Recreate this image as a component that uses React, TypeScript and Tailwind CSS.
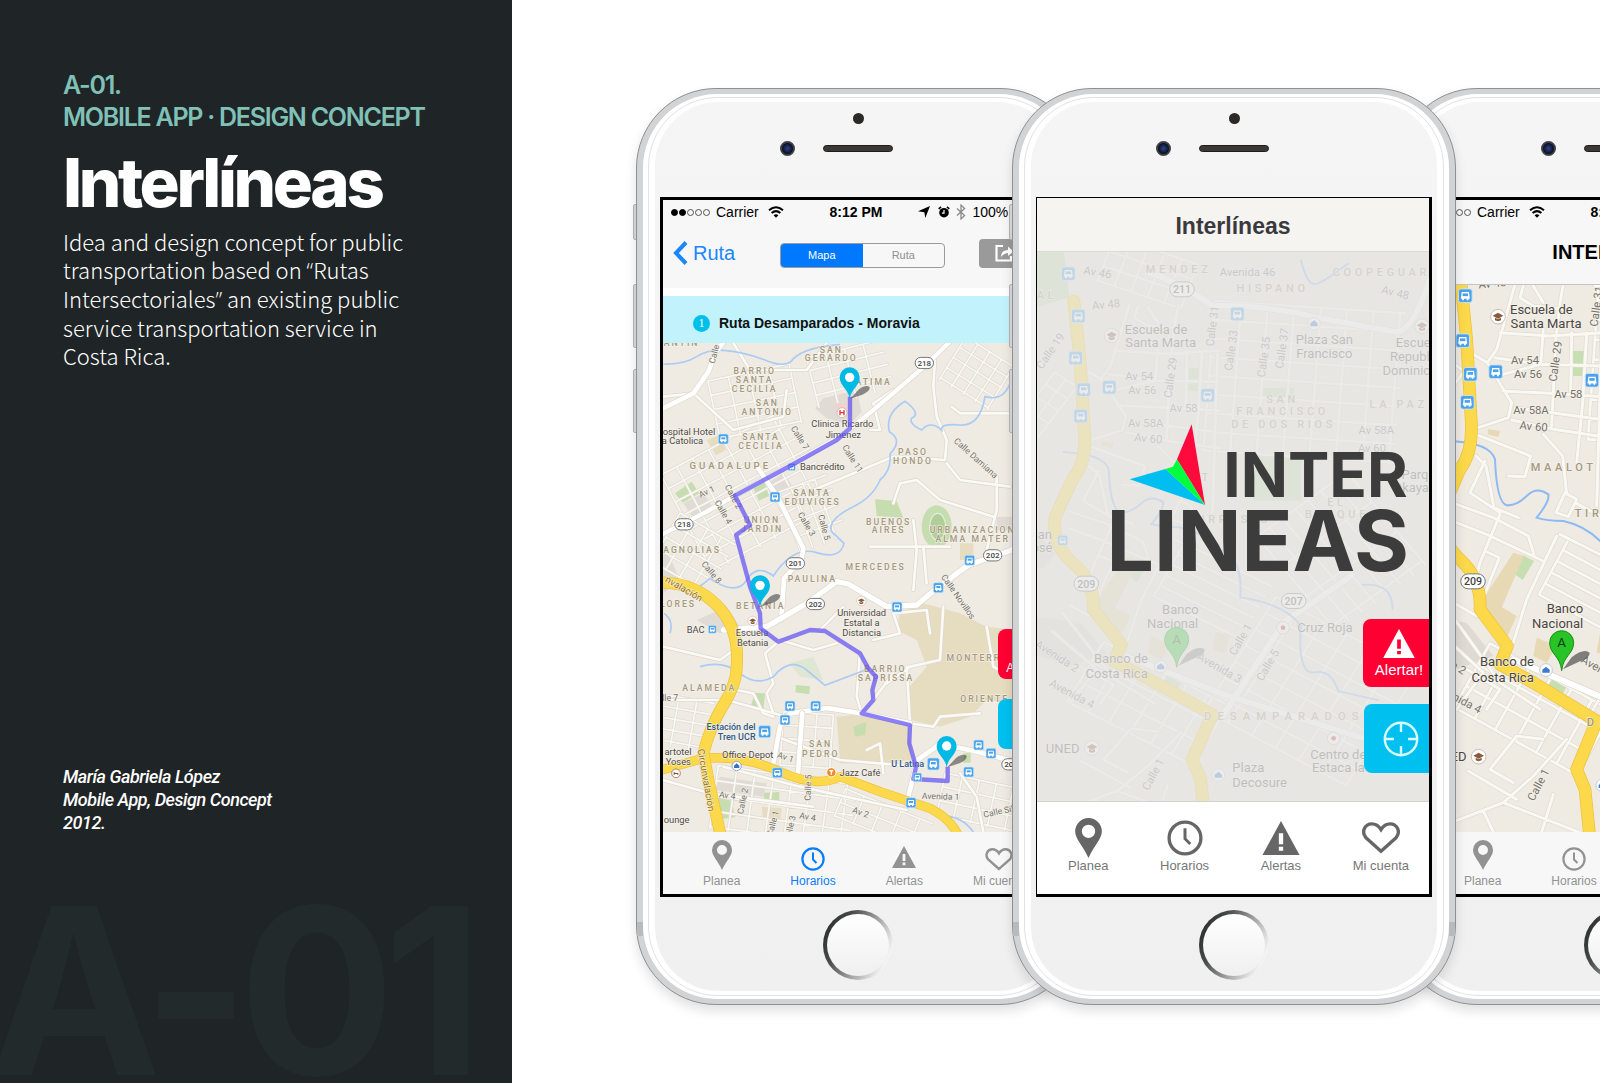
import type { ReactNode } from "react";

type Pt = [number, number];
type Label = { t: string; x: number; y: number; r?: number };

const line = (pts: Pt[]) => "M" + pts.map((p) => p.join(" ")).join("L");

/** Parallel streets in two directions, centred on (cx, cy). */
function grid(cx: number, cy: number, deg: number, w: number, h: number, sx: number, sy: number): string {
  const a = (deg * Math.PI) / 180;
  const at = (x: number, y: number) =>
    `${(cx + x * Math.cos(a) - y * Math.sin(a)).toFixed(0)} ${(cy + x * Math.sin(a) + y * Math.cos(a)).toFixed(0)}`;
  let d = "";
  for (let x = -w / 2; x <= w / 2; x += sx) d += `M${at(x, -h / 2)}L${at(x, h / 2)}`;
  for (let y = -h / 2; y <= h / 2; y += sy) d += `M${at(-w / 2, y)}L${at(w / 2, y)}`;
  return d;
}

function Road({ d, w, fill = "#ffffff", edge = "#ddd7cb" }: { d: string; w: number; fill?: string; edge?: string }) {
  return (
    <g fill="none" strokeLinejoin="round" strokeLinecap="round">
      <path d={d} stroke={edge} strokeWidth={w + 4} />
      <path d={d} stroke={fill} strokeWidth={w} />
    </g>
  );
}

function Labels({ items, size, fill, tracking, weight = 400 }: { items: Label[]; size: number; fill: string; tracking?: number; weight?: number }) {
  return (
    <g
      fontFamily="Roboto, 'Liberation Sans', sans-serif"
      fontSize={size}
      fontWeight={weight}
      fill={fill}
      stroke="#f6f3ec"
      strokeWidth={4}
      strokeOpacity={0.8}
      paintOrder="stroke"
      textAnchor="middle"
      letterSpacing={tracking}
    >
      {items.map((l, i) => (
        <text key={i} x={l.x} y={l.y + size * 0.35} transform={l.r ? `rotate(${l.r} ${l.x} ${l.y})` : undefined}>
          {l.t}
        </text>
      ))}
    </g>
  );
}

function Bus({ x, y, s = 28 }: { x: number; y: number; s?: number }) {
  const k = s / 28;
  return (
    <g transform={`translate(${x} ${y}) scale(${k})`}>
      <rect x={-15} y={-15} width={30} height={30} rx={5} fill="#4ba3ea" stroke="#cfe6fa" strokeWidth={2} />
      <path d="M-8 -8h16l2 15h-3v3h-4v-3h-6v3h-4v-3h-3z" fill="#fff" />
      <path d="M-6 -5h12v6h-12z" fill="#4ba3ea" />
    </g>
  );
}

function Shield({ x, y, t, s = 24 }: { x: number; y: number; t: string; s?: number }) {
  return (
    <g>
      <rect x={x - s * 1.15} y={y - s * 0.7} width={s * 2.3} height={s * 1.4} rx={s * 0.7} fill="#fff" stroke="#777" strokeWidth={3} />
      <text x={x} y={y + s * 0.36} fontSize={s} fontFamily="Roboto, sans-serif" fontWeight={500} fill="#444" textAnchor="middle">
        {t}
      </text>
    </g>
  );
}

function School({ x, y }: { x: number; y: number }) {
  return (
    <g transform={`translate(${x} ${y})`}>
      <circle r={22} fill="#fff" stroke="#c9bfb2" strokeWidth={3} />
      <path d="M0 -12L16 -3L0 6L-16 -3ZM-9 3v8q9 5 18 0v-8l-9 5z" fill="#8a5a3c" />
    </g>
  );
}

function Drop({ x, y }: { x: number; y: number }) {
  return (
    <g transform={`translate(${x} ${y})`}>
      <path d="M2 0L28 -28Q50 -44 60 -34Q62 -22 38 -12Z" fill="#444" opacity={0.6} />
      <path d="M0 0C-4 -28 -30 -38 -30 -64A30 30 0 0 1 30 -64C30 -38 4 -28 0 0Z" fill="#00b9e4" />
      <circle cy={-64} r={14} fill="#fff" />
    </g>
  );
}

const routeDistricts: Label[] = [
  { t: "SAN", x: 574, y: 59 }, { t: "GERARDO", x: 574, y: 84 }, { t: "FATIMA", x: 692, y: 156 },
  { t: "BARRIO", x: 344, y: 123 }, { t: "SANTA", x: 344, y: 149 }, { t: "CECILIA", x: 344, y: 176 },
  { t: "SAN", x: 382, y: 219 }, { t: "ANTONIO", x: 382, y: 246 }, { t: "SANTA", x: 363, y: 322 }, { t: "CECILIA", x: 363, y: 348 },
  { t: "PASO", x: 819, y: 367 }, { t: "HONDO", x: 819, y: 394 }, { t: "SANTA", x: 516, y: 489 }, { t: "EDUVIGES", x: 518, y: 515 },
  { t: "UNION", x: 366, y: 569 }, { t: "JARDIN", x: 366, y: 596 }, { t: "BUENOS", x: 746, y: 576 }, { t: "AIRES", x: 746, y: 601 },
  { t: "URBANIZACION", x: 998, y: 601 }, { t: "ALMA MATER", x: 998, y: 627 }, { t: "MAGNOLIAS", x: 142, y: 661 },
  { t: "MERCEDES", x: 707, y: 711 }, { t: "PAULINA", x: 517, y: 748 }, { t: "BETANIA", x: 362, y: 829 }, { t: "FLORES", x: 104, y: 823 },
  { t: "BARRIO", x: 736, y: 1016 }, { t: "SAPRISSA", x: 738, y: 1043 }, { t: "ALAMEDA", x: 208, y: 1073 },
  { t: "MONTERREY", x: 1023, y: 985 }, { t: "ORIENTE", x: 1034, y: 1107 }, { t: "SAN", x: 542, y: 1243 }, { t: "PEDRO", x: 542, y: 1273 },
  { t: "ANTIN", x: 125, y: 40 },
];
const routeStreets: Label[] = [
  { t: "Calle 7", x: 480, y: 323, r: 58 }, { t: "Calle 11", x: 638, y: 386, r: 58 }, { t: "Av 1", x: 200, y: 485, r: -25 },
  { t: "Calle 2", x: 280, y: 500, r: 62 }, { t: "Calle 4", x: 250, y: 546, r: 60 }, { t: "Calle 3", x: 500, y: 582, r: 60 },
  { t: "Calle 5", x: 553, y: 592, r: 75 }, { t: "Calle 8", x: 215, y: 727, r: 50 }, { t: "Calle Damiana", x: 1008, y: 384, r: 42 },
  { t: "Calle Novillos", x: 955, y: 800, r: 55 }, { t: "Av 1", x: 437, y: 1281, r: 18 }, { t: "Av 4", x: 262, y: 1396, r: 8 },
  { t: "Calle 2", x: 308, y: 1413, r: -78 }, { t: "Calle 5", x: 504, y: 1373, r: -88 }, { t: "Av 4", x: 503, y: 1460, r: 10 },
  { t: "Av 2", x: 662, y: 1447, r: 20 }, { t: "Calle 1", x: 398, y: 1480, r: -75 }, { t: "Calle 3", x: 450, y: 1495, r: -78 },
  { t: "Avenida 1", x: 902, y: 1399, r: 2 }, { t: "Calle Sibaja", x: 1096, y: 1440, r: -12 }, { t: "Calle 7", x: 75, y: 1105 },
  { t: "Calle", x: 222, y: 72, r: -75 },
];
const routePlaces: Label[] = [
  { t: "Hospital Hotel", x: 137, y: 305 }, { t: "La Catolica", x: 120, y: 333 }, { t: "Clinica Ricardo", x: 607, y: 282 }, { t: "Jimenez", x: 610, y: 314 },
  { t: "Bancrédito", x: 547, y: 411 }, { t: "BAC", x: 167, y: 898 }, { t: "Escuela", x: 336, y: 909 }, { t: "Betania", x: 338, y: 938 },
  { t: "Universidad", x: 665, y: 848 }, { t: "Estatal a", x: 665, y: 878 }, { t: "Distancia", x: 665, y: 908 }, { t: "Office Depot", x: 323, y: 1273 },
  { t: "Jazz Café", x: 660, y: 1328 }, { t: "artotel", x: 114, y: 1265 }, { t: "Yoses", x: 115, y: 1296 }, { t: "ounge", x: 110, y: 1468 },
];
const routeTransit: Label[] = [
  { t: "Estación del", x: 273, y: 1190 }, { t: "Tren UCR", x: 290, y: 1220 }, { t: "U Latina", x: 803, y: 1302 },
];

function RouteMap() {
  return (
    <svg viewBox="69 39 1170 1467" className="block h-auto w-full" role="img" aria-label="Mapa de la ruta Desamparados - Moravia">
      <rect x={60} y={30} width={1190} height={1490} fill="#efebe3" />
      <g fill="#e6dcc0">
        <path d="M780 850L850 820L960 850L1040 890L1130 900L1240 960L1240 1100L1110 1120L1040 1110L990 1160L900 1190L815 1170L800 1080L860 1010L830 930L770 900Z" />
        <path d="M590 1160L700 1150L805 1185L815 1290L720 1300L600 1300Z" />
        <path d="M200 330l40 -15l18 45l-30 15zM960 640h40v50h-40zM365 1430l60 5l-5 40l-50 -5z" />
      </g>
      <g fill="#e0dbd4">
        <path d="M550 205L650 180L665 245L630 285L560 265L525 235ZM130 520l60 -30l30 45l-60 30zM390 455l40 -25l25 35l-40 25zM70 640l50 110l-50 40zM170 870l90 -40l40 60l-60 20z" />
        <path d="M240 1340L380 1360L370 1400L225 1380ZM1070 560h60v40h-60z" />
      </g>
      <path d="M585 225l35 -8v45h-25z" fill="#f3cfd0" />
      <g fill="#c6ddb0">
        <path d="M105 490L155 455L178 490L128 518ZM340 475l32 -22l15 45l-30 14zM705 508l65 5l20 50l-80 -5zM345 1088l30 2l-5 52l-38 -12zM468 1065l42 4l-2 24l-42 -6zM372 1388l46 -2v38l-46 -5zM225 1400l50 12l10 50l-40 5zM970 1270h22v28h-22zM640 1190l40 -15l-5 40l-30 5z" />
        <ellipse cx={890} cy={590} rx={45} ry={64} />
      </g>
      <ellipse cx={893} cy={590} rx={24} ry={40} fill="#b0ce98" stroke="#e2eed6" strokeWidth={4} />
      <path d="M450 1000L520 980L550 1050L480 1040Z" fill="#dfe6d2" />

      <Road w={5} fill="#faf8f4" edge="#e0dbd0" d={grid(330, 480, -28, 430, 330, 54, 46)} />
      <Road w={5} fill="#faf8f4" edge="#e0dbd0" d={grid(345, 215, -12, 250, 180, 62, 44)} />
      <Road w={5} fill="#faf8f4" edge="#e0dbd0" d={grid(630, 130, -14, 230, 150, 58, 38)} />
      <Road w={5} fill="#faf8f4" edge="#e0dbd0" d={grid(1010, 130, 32, 170, 150, 42, 36)} />
      <Road w={5} fill="#faf8f4" edge="#e0dbd0" d={grid(520, 550, -20, 150, 190, 38, 48)} />
      <Road w={5} fill="#faf8f4" edge="#e0dbd0" d={grid(160, 670, 30, 190, 170, 48, 42)} />
      <Road w={5} fill="#faf8f4" edge="#e0dbd0" d={grid(430, 1430, 8, 420, 190, 56, 46)} />
      <Road w={5} fill="#faf8f4" edge="#e0dbd0" d={grid(130, 1180, 10, 160, 150, 54, 34)} />
      <Road w={5} fill="#faf8f4" edge="#e0dbd0" d={grid(730, 1470, 22, 280, 90, 60, 44)} />
      <Road w={5} fill="#faf8f4" edge="#e0dbd0" d={grid(1030, 1420, 12, 260, 130, 52, 42)} />
      <Road w={5} fill="#faf8f4" edge="#e0dbd0" d={grid(500, 1230, 4, 150, 160, 50, 40)} />
      <Road
        w={8}
        fill="#fbfaf6"
        d={[
          line([[690, 300], [720, 300], [700, 220], [760, 180]]), line([[885, 90], [880, 170], [890, 260], [920, 330], [915, 390], [760, 380], [520, 480]]),
          line([[920, 400], [960, 450], [1110, 470]]), line([[1070, 440], [1070, 540], [1040, 660]]), line([[760, 520], [780, 460], [830, 450], [900, 510], [1060, 560]]),
          line([[820, 570], [830, 660], [820, 780]]), line([[690, 650], [930, 650]]), line([[850, 650], [860, 760]]),
          line([[375, 970], [400, 1060], [380, 1090], [400, 1150]]), line([[375, 970], [420, 930], [520, 960], [590, 940]]),
          line([[660, 970], [650, 1100], [665, 1150]]), line([[540, 900], [610, 830]]), line([[700, 930], [780, 910], [760, 850], [860, 840], [870, 910]]),
          line([[740, 1060], [810, 1010], [900, 990], [910, 830]]), line([[700, 1110], [760, 1030]]), line([[800, 1010], [810, 1180]]),
          line([[810, 1180], [880, 1190], [900, 1160], [1020, 1150]]), line([[1040, 890], [1060, 1010], [1110, 1040]]),
          line([[295, 950], [240, 990], [69, 950]]), line([[290, 1080], [340, 1090], [370, 1150], [400, 1160]]), line([[69, 1110], [260, 1110], [440, 1160]]),
          line([[410, 1220], [600, 1290], [830, 1310]]), line([[680, 1260], [720, 1240], [730, 1330]]), line([[250, 1310], [480, 1370], [800, 1440]]),
          line([[280, 39], [330, 120], [500, 120], [560, 39]]), line([[69, 200], [160, 190], [280, 300], [430, 260], [440, 180]]),
          line([[960, 1330], [1010, 1400], [1030, 1506]]), line([[935, 230], [960, 250], [1110, 250]]), line([[69, 1350], [210, 1390], [520, 1430]]),
        ].join("")}
      />
      <path
        d="M70 102Q130 105 170 80T260 62Q320 68 380 92T460 86Q500 50 600 44M1240 110Q1150 130 1110 160Q1090 215 1035 200Q1020 290 960 285T905 300Q870 270 845 300Q805 280 815 265Q845 250 795 214Q735 250 748 305Q790 330 750 372Q755 420 720 450Q700 500 640 530Q560 570 575 605L612 640Q600 690 530 668T400 738Q350 700 320 750T210 745Q160 790 130 780M180 1010Q250 990 300 1030T400 1040Q450 980 500 1020L555 1066L690 1015M890 1460Q960 1450 1000 1506M72 850q30 20 18 60"
        fill="none"
        stroke="#a9cbf5"
        strokeWidth={5}
      />
      <Road w={14} d={line([[69, 235], [160, 190], [205, 125], [225, 70], [262, 20]])} />
      <Road w={13} d={line([[69, 612], [200, 545], [285, 497], [450, 405], [600, 320], [700, 240], [850, 112], [940, 25]])} />
      <Road w={14} d={line([[355, 415], [415, 505], [490, 655], [484, 690], [432, 745], [424, 870]])} />
      <Road w={16} d={line([[1240, 590], [1110, 662], [985, 705], [890, 775], [830, 825], [740, 830], [625, 762], [590, 755], [500, 820], [380, 890], [250, 900]])} />
      <Road w={14} d={line([[400, 1300], [420, 1190], [450, 1150], [560, 1134], [665, 1150], [810, 1180]])} />
      <Road w={14} d={line([[487, 1150], [474, 1330]])} />
      <Road w={14} d={line([[800, 1420], [832, 1290], [900, 1242], [1000, 1262], [1115, 1292], [1240, 1300]])} />
      <Road w={24} fill="#fcd94a" edge="#eebf3d" d="M50 1324L190 1285Q310 1275 420 1325T600 1340L720 1385L870 1435Q940 1470 960 1530" />
      <Road w={32} fill="#fcd94a" edge="#eebf3d" d="M50 757Q160 755 230 825T290 1010Q290 1060 250 1125T190 1270L205 1350L245 1530" />
      <Labels items={routeDistricts} size={26} fill="#a5987e" tracking={6} weight={500} />
      <Labels items={[{ t: "GUADALUPE", x: 271, y: 407 }]} size={29} fill="#a5987e" tracking={9} weight={500} />
      <Labels items={routeStreets} size={26} fill="#76716a" />
      <Labels items={routePlaces} size={28} fill="#4f4b48" />
      <Labels items={routeTransit} size={27} fill="#2e5a88" weight={500} />
      <Labels items={[{ t: "nvalación", x: 132, y: 776, r: 30 }, { t: "Circunvalación", x: 199, y: 1350, r: 80 }]} size={29} fill="#957015" />
      <Shield x={853} y={99} t="218" /><Shield x={132} y={583} t="218" /><Shield x={466} y={700} t="201" />
      <Shield x={1058} y={676} t="202" /><Shield x={526} y={822} t="202" /><Shield x={1113} y={1303} t="202" />
      <Bus x={250} y={327} /><Bus x={405} y={501} /><Bus x={455} y={411} s={20} /><Bus x={989} y={691} /><Bus x={895} y={773} />
      <Bus x={771} y={831} /><Bus x={450} y={1128} /><Bus x={527} y={1128} /><Bus x={435} y={1170} /><Bus x={412} y={1328} />
      <Bus x={374} y={1205} s={34} /><Bus x={880} y={1302} s={34} /><Bus x={813} y={1418} /><Bus x={1016} y={1245} />
      <Bus x={1053} y={1270} /><Bus x={986} y={1326} /><Bus x={217} y={898} s={22} />
      <g transform="translate(338 873) scale(.65)"><School x={0} y={0} /></g>
      <g transform="translate(664 813) scale(.65)"><School x={0} y={0} /></g>
      <circle cx={574} cy={1327} r={14} fill="#f08b2c" stroke="#fff" strokeWidth={3} />
      <path d="M567 1320h14l-5 7v7h-4v-7z" fill="#fff" />
      <circle cx={290} cy={1308} r={14} fill="#fff" stroke="#8fa9cf" strokeWidth={3} />
      <path d="M282 1314v-7l8 -7l8 7v7z" fill="#3c6fbd" />
      <circle cx={108} cy={1330} r={13} fill="#fff" stroke="#a58873" strokeWidth={3} />
      <path d="M101 1332v-6h3v3h11v6h-3v-3h-8v3h-3z" fill="#8a5a3c" />
      <circle cx={606} cy={248} r={15} fill="#fff" stroke="#d7b7b5" strokeWidth={3} />
      <path d="M600 240v16M612 240v16M600 248h12" stroke="#d33" strokeWidth={4} />
      <path
        d={line([[630, 200], [630, 295], [590, 330], [455, 405], [285, 497], [330, 585], [288, 615], [330, 770], [360, 850], [362, 895], [415, 935], [510, 900], [555, 903], [660, 970], [685, 1015], [708, 1040], [697, 1080], [700, 1110], [665, 1150], [810, 1185], [808, 1240], [828, 1310], [820, 1347], [923, 1353], [923, 1310]])}
        fill="none"
        stroke="#5f50f2"
        strokeOpacity={0.72}
        strokeWidth={13}
        strokeLinejoin="round"
      />
      <Bus x={832} y={1342} s={24} />
      <Drop x={629} y={206} /><Drop x={360} y={830} /><Drop x={920} y={1312} />
    </svg>
  );
}

const cityDistricts: Label[] = [
  { t: "MENDEZ", x: 475, y: 84 }, { t: "HISPANO", x: 757, y: 142 }, { t: "COOPEGUARIA", x: 1110, y: 94 }, { t: "SAN", x: 787, y: 475 },
  { t: "FRANCISCO", x: 787, y: 511 }, { t: "DE DOS RIOS", x: 790, y: 548 }, { t: "LA PAZ", x: 1135, y: 490 }, { t: "MAALOT", x: 476, y: 708 },
  { t: "TIRRASES", x: 632, y: 835 }, { t: "EL", x: 950, y: 782 }, { t: "BOSQUE", x: 950, y: 820 }, { t: "AL", x: 80, y: 162 },
];
const cityStreets: Label[] = [
  { t: "Av 46", x: 232, y: 94, r: 10 }, { t: "Avenida 46", x: 682, y: 94 }, { t: "Av 48", x: 257, y: 190, r: -5 }, { t: "Av 48", x: 1125, y: 155, r: 14 },
  { t: "Calle 31", x: 576, y: 255, r: -82 }, { t: "Calle 33", x: 632, y: 328, r: -82 }, { t: "Calle 35", x: 730, y: 348, r: -82 }, { t: "Calle 37", x: 785, y: 322, r: -82 },
  { t: "Calle 29", x: 450, y: 410, r: -82 }, { t: "Av 54", x: 357, y: 405 }, { t: "Av 56", x: 366, y: 446 }, { t: "Av 58", x: 490, y: 502 },
  { t: "Av 58A", x: 376, y: 545 }, { t: "Av 60", x: 384, y: 592, r: 5 }, { t: "Av 58A", x: 1068, y: 567 }, { t: "Av 60", x: 1055, y: 620 },
  { t: "Avenida 2", x: 110, y: 1245, r: 33 }, { t: "Avenida 4", x: 155, y: 1358, r: 28 }, { t: "Avenida 3", x: 598, y: 1280, r: 30 },
  { t: "Calle 1", x: 660, y: 1195, r: -60 }, { t: "Calle 5", x: 742, y: 1272, r: -60 }, { t: "Calle 1", x: 398, y: 1600, r: -62 }, { t: "Calle 19", x: 90, y: 330, r: -55 },
];
const cityPlaces: Label[] = [
  { t: "Escuela de", x: 407, y: 264 }, { t: "Santa Marta", x: 421, y: 304 }, { t: "Plaza San", x: 912, y: 295 }, { t: "Francisco", x: 912, y: 336 },
  { t: "Escuela", x: 1194, y: 305 }, { t: "Republica", x: 1194, y: 346 }, { t: "Dominicana", x: 1190, y: 388 }, { t: "Parque", x: 1205, y: 700 }, { t: "Okayama", x: 1200, y: 740 },
  { t: "Banco", x: 480, y: 1105 }, { t: "Nacional", x: 457, y: 1146 }, { t: "Banco de", x: 302, y: 1253 }, { t: "Costa Rica", x: 289, y: 1298 }, { t: "Cruz Roja", x: 914, y: 1160 },
  { t: "UNED", x: 127, y: 1521 }, { t: "Plaza", x: 684, y: 1580 }, { t: "Decosure", x: 718, y: 1623 }, { t: "Centro de", x: 954, y: 1540 }, { t: "Estaca la", x: 954, y: 1580 },
  { t: "San", x: 62, y: 880 }, { t: "José", x: 54, y: 918 },
];
const cityStops: Pt[] = [[144, 98], [174, 225], [166, 351], [190, 446], [181, 525], [267, 439], [651, 219], [562, 463]];

function CityMap({ viewBox, wide, label }: { viewBox: string; wide: boolean; label: string }) {
  const px = (x: number) => (wide ? x : Math.round(x * 0.98 + 25));
  const py = (y: number) => (wide ? y : Math.round(y * 1.067 + 79));
  const move = (ls: Label[]) => ls.map((l) => ({ ...l, x: px(l.x), y: py(l.y) }));
  const minor = "#e0dbd0";
  return (
    <svg viewBox={viewBox} className="block h-auto w-full" role="img" aria-label={label}>
      <rect x={0} y={0} width={1300} height={2000} fill="#efebe3" />
      <g transform={wide ? "matrix(1.02 0 0 .937 -25.5 -74)" : undefined}>
        <path d="M40 80H150L170 260L40 300ZM515 485H555L550 560H515ZM370 1098L402 1115L368 1172L338 1150ZM455 1455L505 1480L485 1520L440 1490ZM710 760H850V910H710ZM730 550H830V590H730Z" fill="#c6dfb0" />
        <path d="M340 1090L372 1100L285 1300L228 1262ZM265 720l35 5l-5 18l-32 -8zM300 1250L350 1280L320 1345L270 1310ZM410 1345L470 1370L440 1420L400 1400ZM600 1330l40 10l-10 60l-40 -10z" fill="#e6d9b4" />
        <path d="M60 1280L200 1300L280 1400L170 1440L60 1400ZM60 1000L130 1080L90 1130L60 1120Z" fill="#dfdad2" />
        <Road w={8} fill="#faf8f3" edge={minor} d={grid(590, 1200, 28, 290, 190, 300, 38)} />
        <Road w={8} fill="#faf8f3" edge={minor} d={grid(400, 1560, 29, 420, 220, 70, 73)} />
        <Road w={8} fill="#faf8f3" edge={minor} d={grid(880, 1520, 30, 480, 420, 80, 60)} />
        <Road w={8} fill="#faf8f3" edge={minor} d={grid(860, 530, 4, 560, 480, 78, 60)} />
        <Road w={8} fill="#faf8f3" edge={minor} d={grid(960, 1080, 52, 380, 360, 120, 48)} />
        <Road w={8} fill="#faf8f3" edge={minor} d={grid(90, 620, 35, 80, 240, 40, 48)} />
        {wide && <Road w={8} fill="#faf8f3" edge={minor} d={grid(400, 180, 20, 260, 150, 52, 50)} />}
        <Road
          w={9}
          fill="#faf8f3"
          edge={minor}
          d={[
            line([[345, 285], [290, 480], [262, 520], [220, 495]]), line([[262, 520], [335, 640], [325, 685], [235, 715]]),
            line([[285, 505], [420, 525], [600, 530]]), line([[310, 605], [450, 612], [610, 622]]), line([[345, 655], [600, 690]]), line([[335, 692], [460, 720], [610, 742]]),
            line([[300, 430], [450, 440], [610, 430]]), line([[430, 420], [422, 525], [290, 560]]), line([[515, 430], [512, 610]]), line([[468, 440], [455, 710]]),
            line([[560, 430], [548, 640], [530, 820]]), line([[605, 440], [590, 950]]), line([[370, 290], [360, 325], [400, 350], [490, 360]]), line([[490, 285], [480, 340], [470, 430]]), line([[400, 290], [430, 340]]),
            line([[430, 735], [488, 800], [500, 915]]), line([[495, 910], [468, 970], [505, 982], [530, 930], [495, 910]]), line([[525, 940], [600, 980]]),
            line([[235, 738], [392, 800], [375, 862], [325, 860]]), line([[228, 800], [258, 830], [282, 955], [355, 985]]), line([[255, 815], [210, 910], [300, 970]]),
            line([[170, 945], [280, 985], [385, 1040], [402, 1095]]), line([[300, 975], [240, 1120], [220, 1200]]), line([[170, 1000], [260, 1035], [430, 1115]]),
            line([[255, 1085], [298, 1105], [250, 1225]]), line([[470, 1040], [380, 1230], [340, 1360]]), line([[610, 1100], [480, 1035]]), line([[170, 1245], [230, 1280]]),
            line([[150, 1270], [300, 1480], [420, 1560]]), line([[120, 1330], [250, 1450], [170, 1560]]), line([[200, 1440], [300, 1500], [260, 1560]]),
            line([[340, 1780], [270, 1740], [350, 1640], [430, 1650]]), line([[205, 1745], [350, 1830]]), line([[100, 1920], [310, 1840], [540, 1930]]),
            line([[250, 1865], [280, 1928]]), line([[460, 1815], [425, 1928]]), line([[310, 1840], [400, 1760], [500, 1650]]),
          ].join("")}
        />
        <Road w={18} d="M400 180Q470 200 590 285Q760 285 900 325L1130 370Q1180 370 1230 200M340 1410L620 1530L1030 1670M620 1600L800 1300L1000 1150" />
        <path
          d="M150 755Q270 760 285 810Q290 940 320 948Q350 950 380 920T445 915Q450 935 410 985Q440 995 490 995Q560 1010 610 1065Q680 1090 672 1220Q800 1240 850 1310Q840 1470 890 1460T960 1520L1080 1550M850 140Q870 230 900 215T990 150M1030 1180Q1120 1170 1120 1260"
          fill="none"
          stroke="#8db9f5"
          strokeWidth={6}
        />
        <Road w={34} fill="#fcd94a" edge="#eebf3d" d="M182 270L200 450L214 700Q218 790 180 840L128 960Q115 1050 180 1110T240 1260L322 1370L300 1425L400 1480L590 1595L530 1740L555 1800L570 1950" />
      </g>
      <Labels items={move(cityDistricts)} size={33} fill="#a5987e" tracking={11} weight={500} />
      <Labels items={move([{ t: "DESAMPARADOS", x: 792, y: 1424 }])} size={34} fill="#a5987e" tracking={18} weight={500} />
      <Labels items={move(cityStreets)} size={34} fill="#76716a" />
      <Labels items={move(cityPlaces)} size={39} fill="#4a4643" />
      <Shield x={px(198)} y={py(1028)} t="209" s={32} />
      <Shield x={px(485)} y={py(145)} t="211" s={32} />
      <Shield x={px(820)} y={py(1080)} t="207" s={32} />
      {cityStops.map(([x, y]) => <Bus key={`${x}-${y}`} x={px(x)} y={py(y)} s={38} />)}
      <Bus x={px(127)} y={py(898)} s={28} />
      <School x={px(274)} y={py(284)} />
      <School x={px(215)} y={py(1521)} />
      <School x={px(1205)} y={py(256)} />
      {([[881, 248], [594, 1602], [421, 1277]] as Pt[]).map(([x, y]) => (
        <g key={x} transform={`translate(${px(x)} ${py(y)})`}>
          <circle r={19} fill="#fff" stroke="#c4cbd6" strokeWidth={3} />
          <path d="M-11 8v-9l11 -9l11 9v9z" fill="#3c7bd0" />
        </g>
      ))}
      {([[788, 1160], [940, 1492]] as Pt[]).map(([x, y]) => (
        <g key={x} transform={`translate(${px(x)} ${py(y)})`}>
          <circle r={19} fill="#fff" stroke="#c9bfb2" strokeWidth={3} />
          <circle r={7} fill="#c0392b" />
        </g>
      ))}
      <g transform={`translate(${px(469)} ${py(1279)})`}>
        <path d="M4 -4L30 -40Q66 -68 84 -54Q86 -38 50 -26Z" fill="#444" opacity={0.65} />
        <path d="M0 0C-4 -44 -36 -50 -36 -84A36 36 0 0 1 36 -84C36 -50 4 -44 0 0Z" fill="#27c327" stroke="#159015" strokeWidth={3} />
        <text x={0} y={-70} fontSize={40} fontFamily="Roboto, sans-serif" textAnchor="middle" fill="#0d3b0d">A</text>
      </g>
      {wide && <rect x={0} y={0} width={1300} height={1800} fill="#e5e5e4" opacity={0.76} />}
    </svg>
  );
}

function PinIcon({ className }: { className: string }) {
  return (
    <svg viewBox="0 0 20 30" className={className} aria-hidden="true">
      <path fillRule="evenodd" fill="currentColor" d="M10 0A10 10 0 0 1 20 10C20 16 14 21 10 30C6 21 0 16 0 10A10 10 0 0 1 10 0ZM10 5A5 5 0 1 0 10 15A5 5 0 1 0 10 5Z" />
    </svg>
  );
}
function ClockIcon({ className }: { className: string }) {
  return (
    <svg viewBox="0 0 24 24" className={className} fill="none" stroke="currentColor" aria-hidden="true">
      <circle cx={12} cy={12} r={10.6} strokeWidth={2.2} />
      <path d="M12 5.5V12.5L15.5 16" strokeWidth={2} />
    </svg>
  );
}
function AlertIcon({ className, mark }: { className: string; mark: string }) {
  return (
    <svg viewBox="0 0 24 22" className={className} aria-hidden="true">
      <path d="M12 0L24 22H0Z" fill="currentColor" />
      <path d="M10.6 8H13.4V15H10.6ZM10.6 16.6H13.4V19.2H10.6Z" fill={mark} />
    </svg>
  );
}
function HeartIcon({ className }: { className: string }) {
  return (
    <svg viewBox="0 0 28 23" className={className} fill="none" stroke="currentColor" strokeWidth={2.4} aria-hidden="true">
      <path d="M14 21L3.2 11.4C-.5 7 2.5 1.3 7.4 1.3C10.5 1.3 12.5 3 14 5.4C15.5 3 17.5 1.3 20.6 1.3C25.5 1.3 28.5 7 24.8 11.4Z" />
    </svg>
  );
}

function Tab({ label, active, children }: { label: string; active?: boolean; children: ReactNode }) {
  return (
    <button type="button" className={active ? "flex flex-col items-center text-[#0a7cff]" : "flex flex-col items-center text-[#929292]"}>
      <span className="flex h-9 items-center">{children}</span>
      <span className="text-[12px] leading-4">{label}</span>
    </button>
  );
}

function TabBar({ active }: { active?: string }) {
  return (
    <nav className="flex h-[62px] shrink-0 items-start justify-between bg-[#f7f7f7] pt-[5px] pr-7 pl-10" aria-label="Secciones">
      <Tab label="Planea"><PinIcon className="h-[30px] w-5" /></Tab>
      <Tab label="Horarios" active={active === "Horarios"}><ClockIcon className="mt-2 size-6" /></Tab>
      <Tab label="Alertas"><AlertIcon className="mt-1 h-[22px] w-6" mark="#f7f7f7" /></Tab>
      <Tab label="Mi cuenta"><HeartIcon className="mt-2 h-[23px] w-7" /></Tab>
    </nav>
  );
}

function StatusBar() {
  return (
    <div className="grid h-6 grid-cols-[1fr_auto_1fr] items-center pr-3 pl-2 text-[14px] leading-4 text-black">
      <div className="flex items-center gap-px">
        {[0, 1, 2, 3, 4].map((i) => (
          <span key={i} className={i < 2 ? "size-[7px] rounded-full border border-black bg-black" : "size-[7px] rounded-full border border-[#555]"} />
        ))}
        <span className="ml-[5px]">Carrier</span>
        <svg viewBox="0 0 16 12" className="ml-2 h-3 w-4" fill="none" stroke="currentColor" strokeWidth={2} aria-hidden="true">
          <path d="M1 4.2Q8 -1.8 15 4.2M3.6 7Q8 3.3 12.4 7" />
          <path d="M8 11.8L5.6 9.3Q8 7.3 10.4 9.3Z" fill="currentColor" stroke="none" />
        </svg>
      </div>
      <span className="font-bold">8:12 PM</span>
      <div className="flex items-center pl-9">
        <svg viewBox="0 0 14 14" className="h-3 w-3" aria-hidden="true"><path d="M14 0L8.5 14L7.4 7.4L0 6Z" /></svg>
        <svg viewBox="0 0 14 14" className="ml-2 size-3" aria-hidden="true">
          <circle cx={7} cy={7.8} r={5.6} /><path d="M.8 3.4L3.6 1M13.2 3.4L10.4 1" stroke="#000" strokeWidth={1.8} />
          <path d="M7 4.6V8.2H4.6" stroke="#fff" strokeWidth={1.4} fill="none" />
        </svg>
        <svg viewBox="0 0 10 16" className="ml-[6px] h-4 w-[10px]" fill="none" stroke="#8a8a8a" strokeWidth={1.3} aria-hidden="true"><path d="M1 4.5L8.6 11.5L5 15V1L8.6 4.5L1 11.5" /></svg>
        <span className="ml-[6px]">100%</span>
      </div>
    </div>
  );
}

function Phone({ children, className, frame }: { children: ReactNode; className: string; frame: string }) {
  return (
    <article className={`relative w-[444px] shrink-0 ${className}`}>
      <span className="absolute top-[116px] -left-[3px] h-9 w-2 rounded-xs border border-[#b4b4b4] bg-[#dedede]" />
      <span className="absolute top-[196px] -left-[3px] h-16 w-2 rounded-xs border border-[#b4b4b4] bg-[#dedede]" />
      <span className="absolute top-[281px] -left-[3px] h-16 w-2 rounded-xs border border-[#b4b4b4] bg-[#dedede]" />
      <div className="relative rounded-[80px] border border-[#8f9091] bg-[#d2d3d5] px-[6px] py-[5px] shadow-[0_6px_12px_rgba(0,0,0,0.12)]">
        <span className="absolute top-[833px] left-0 h-[14px] w-[6px] bg-[#b9babc]" />
        <span className="absolute top-[833px] right-0 h-[14px] w-[6px] bg-[#b9babc]" />
        <div className="rounded-[74px] bg-white px-[5px] py-[3px]">
          <div className="rounded-[70px] border border-[#e2e2e2] bg-white px-[6px] py-1">
            <div className="rounded-[64px] bg-linear-to-b from-[#f5f5f5] to-[#f0f0f0] px-[5px]">
              <div className="flex h-[95px] flex-col items-center pt-[11px]">
                <span className="size-[11px] rounded-full bg-[#2b2827]" />
                <div className="mt-[17px] grid w-full grid-cols-[1fr_70px_1fr] items-center">
                  <span className="mr-7 size-[15px] justify-self-end rounded-full border-2 border-[#3c4048] bg-[radial-gradient(circle,#2a4390,#0d1220_65%)]" />
                  <span className="h-[7px] rounded-full border border-[#1f1d1c] bg-[#3c3836]" />
                </div>
              </div>
              <div className={`flex h-[700px] flex-col overflow-hidden border-black ${frame}`}>{children}</div>
              <div className="flex h-[94px] justify-center pt-[13px]">
                <button type="button" aria-label="Inicio" className="size-[70px] rounded-full bg-[linear-gradient(115deg,#2b2d2d_8%,#4a4c4c_30%,#a9aaa9_60%,#f4f4f4_85%,#d0d0d0)] p-1">
                  <span className="block size-full rounded-full bg-linear-to-b from-white to-[#efefef]" />
                </button>
              </div>
            </div>
          </div>
        </div>
      </div>
    </article>
  );
}

function RouteScreen() {
  return (
    <>
      <header className="h-[88px] shrink-0 bg-[#f7f7f7]">
        <StatusBar />
        <div className="flex items-center px-[10px] pt-[13px]">
          <a href="#ruta" className="flex w-[107px] items-center gap-[5px] text-[20px] leading-8 text-[#1a86ff]">
            <svg viewBox="0 0 15 24" className="h-6 w-[15px]" fill="none" stroke="currentColor" strokeWidth={4} aria-hidden="true"><path d="M13 1.5L3 12L13 22.5" /></svg>
            Ruta
          </a>
          <div className="mt-1 flex h-[25px] w-[165px] overflow-hidden rounded-[4px] border border-[#9a9a9a] text-[11px]">
            <button type="button" className="flex-1 bg-[#0078ff] text-white">Mapa</button>
            <button type="button" className="flex-1 text-[#8f8f8f]">Ruta</button>
          </div>
          <button type="button" aria-label="Compartir" className="ml-[34px] flex h-[29px] w-[52px] items-center justify-center rounded-[4px] bg-[#9a9a9a]">
            <svg viewBox="0 0 20 18" className="h-[18px] w-5" fill="none" stroke="#fff" strokeWidth={2.2} aria-hidden="true">
              <path d="M8 2H1.5V16.5H16V12" /><path d="M6 13Q6 6 13 6V2.5L18.5 7.5L13 12V9Q9 9 6 13Z" fill="#fff" stroke="none" />
            </svg>
          </button>
        </div>
      </header>
      <div className="flex h-[55px] shrink-0 items-center gap-[9px] border-t-8 border-white bg-[#c2f3fd] pt-[7px] pl-[30px]">
        <span className="flex size-[17px] items-center justify-center rounded-full bg-[#00c0ea] font-[Liberation_Serif,serif] text-[12px] text-white">1</span>
        <h2 className="text-[14px] font-bold text-[#111]">Ruta Desamparados - Moravia</h2>
      </div>
      <div className="relative min-h-0 flex-1 overflow-hidden">
        <RouteMap />
        <button type="button" className="absolute top-[286px] right-0 h-[50px] w-[55px] rounded-l-lg bg-[#ff0033] pt-7 text-[12px] text-white">Alertar!</button>
        <button type="button" aria-label="Mi ubicación" className="absolute top-[356px] right-0 h-[50px] w-[55px] rounded-l-lg bg-[#00c0f0]" />
      </div>
      <TabBar active="Horarios" />
    </>
  );
}

function SplashScreen() {
  return (
    <>
      <header className="flex h-[54px] shrink-0 items-center justify-center border-b border-[#dadad6] bg-[#f5f4f0] pt-[2px]">
        <h2 className="text-[23px] leading-7 font-bold text-[#3a3a3e]">Interlíneas</h2>
      </header>
      <div className="relative h-[550px] shrink-0 overflow-hidden border-b border-[#d2d2d0]">
        <CityMap viewBox="50 33 1176 1650" wide label="Mapa de la ciudad" />
        <svg viewBox="260 540 912 465" className="absolute top-[169px] left-[70px] h-[155px] w-[304px]" role="img" aria-label="Inter Lineas">
          <path d="M514 550L554 792L470 655Z" fill="#ff0a3c" />
          <path d="M328 715L435 684L554 792Z" fill="#00bff0" />
          <path d="M435 684L458 677L470 655L554 792Z" fill="#00ff3c" />
          <g fontFamily="Inter, sans-serif" fontWeight={700} fill="#3c3c3c">
            <text x={1162} y={768} fontSize={186} textAnchor="end">INTER</text>
            <text x={1166} y={990} fontSize={252} textAnchor="end">LINEAS</text>
          </g>
        </svg>
        <button type="button" className="absolute top-[367px] right-0 flex h-[68px] w-[66px] flex-col items-center rounded-l-lg bg-[#ff0033] pt-[10px] pl-[6px] text-white">
          <AlertIcon className="h-[29px] w-8" mark="#ff0033" />
          <span className="text-[15px] leading-6">Alertar!</span>
        </button>
        <button type="button" aria-label="Mi ubicación" className="absolute top-[452px] right-0 flex h-[69px] w-[65px] items-center justify-center rounded-l-lg bg-[#00c0f0] pl-2">
          <svg viewBox="0 0 36 36" className="size-9" fill="none" stroke="#d8fbff" strokeWidth={2.4} aria-hidden="true">
            <circle cx={18} cy={18} r={16.2} /><path d="M18 2V11M18 25V34M2 18H11M25 18H34" />
          </svg>
        </button>
      </div>
      <nav className="flex min-h-0 flex-1 items-start justify-between bg-white pt-4 pr-5 pl-[31px] text-[13px] leading-4 text-[#777]" aria-label="Secciones">
        <button type="button" className="flex flex-col items-center"><PinIcon className="h-10 w-[27px] text-[#666]" />Planea</button>
        <button type="button" className="flex flex-col items-center"><span className="flex h-10 items-center"><ClockIcon className="size-9 text-[#666]" /></span>Horarios</button>
        <button type="button" className="flex flex-col items-center"><span className="flex h-10 items-center"><AlertIcon className="h-[34px] w-[38px] text-[#666]" mark="#fff" /></span>Alertas</button>
        <button type="button" className="flex flex-col items-center"><span className="flex h-10 items-center"><HeartIcon className="h-8 w-10 text-[#666]" /></span>Mi cuenta</button>
      </nav>
    </>
  );
}

function CityScreen() {
  return (
    <>
      <header className="h-[85px] shrink-0 border-b border-[#c4c4c4] bg-[#f7f7f7]">
        <StatusBar />
        <h2 className="pt-3 text-center text-[20px] leading-8 font-bold text-black">INTERLINEAS</h2>
      </header>
      <div className="min-h-0 flex-1 overflow-hidden">
        <CityMap viewBox="72 287 1170 1644" wide={false} label="Mapa de Desamparados" />
      </div>
      <TabBar />
    </>
  );
}

export default function App() {
  return (
    <div className="flex min-h-screen w-full overflow-hidden bg-white font-['Liberation_Sans',Arial,sans-serif]">
      <aside className="relative flex w-[32%] shrink-0 flex-col overflow-hidden bg-[#1f2426] px-[63px] pt-[69px] pb-[249px]">
        <p aria-hidden="true" className="absolute bottom-[-23px] left-[-12px] font-[Inter,sans-serif] text-[232px] leading-[230px] font-bold tracking-tighter whitespace-nowrap text-[#232a2c]">A-01</p>
        <div className="relative font-[Inter,sans-serif]">
          <p className="text-[25px] leading-8 font-semibold tracking-tighter whitespace-nowrap text-[#80c1b7]">
            A-01.
            <br />
            MOBILE APP · DESIGN CONCEPT
          </p>
          <h1 className="mt-[10px] text-[67px] leading-[80px] font-extrabold tracking-tighter text-white">Interlíneas</h1>
        </div>
        <p className="relative mt-1 font-['Noto_Sans_CJK_SC',sans-serif] text-[22px] leading-7 font-light whitespace-nowrap text-white">
          Idea and design concept for public
          <br />
          transportation based on <span className="font-['Open_Sans']">“</span>Rutas
          <br />
          Intersectoriales<span className="font-['Open_Sans']">”</span> an existing public
          <br />
          service transportation service in
          <br />
          Costa Rica.
        </p>
        <address className="relative mt-auto font-[Roboto,sans-serif] text-[18px] leading-[23px] font-medium tracking-tight text-white italic">
          María Gabriela López
          <br />
          Mobile App, Design Concept
          <br />
          2012.
        </address>
      </aside>
      <main className="flex min-w-0 flex-1 items-start overflow-hidden pt-[88px] pb-[78px] pl-[124px]">
        <Phone className="z-0" frame="border-[3px]"><RouteScreen /></Phone>
        <Phone className="z-10 -ml-[68px]" frame="border-t border-l border-r-[3px] border-b-[3px]"><SplashScreen /></Phone>
        <Phone className="z-0 -ml-[59px]" frame="border-[3px]"><CityScreen /></Phone>
      </main>
    </div>
  );
}
